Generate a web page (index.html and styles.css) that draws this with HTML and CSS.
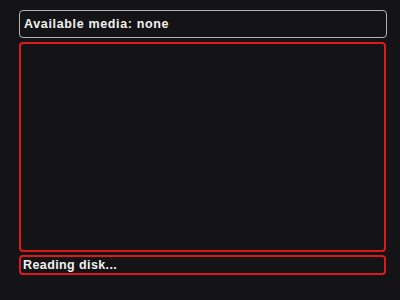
FILE: index.html
```html
<!DOCTYPE html>
<html>
<head>
<meta charset="utf-8">
<link rel="stylesheet" href="styles.css">
</head>
<body>
<div class="screen">
  <div class="box header"><span class="label">Available media: none</span></div>
  <div class="box list"></div>
  <div class="box status"><span class="label">Reading disk...</span></div>
</div>
</body>
</html>
```
FILE: styles.css
```css
html, body {
  margin: 0;
  padding: 0;
  background: #141316;
}
.screen {
  width: 400px;
  height: 300px;
  box-sizing: border-box;
  padding: 10px 14px 25px 19px;
  display: flex;
  flex-direction: column;
  gap: 3px;
  font-family: "Liberation Sans", Arial, sans-serif;
}
.box {
  box-sizing: border-box;
  border-radius: 4px;
  background: #141316;
}
.header {
  height: 28px;
  border: 1.5px solid #b4b4b4;
  display: flex;
  align-items: center;
  padding-left: 4px;
  margin-bottom: 1px;
  margin-right: -1px;
}
.list {
  flex: 1;
  border: 2px solid #dc1a1a;
}
.status {
  height: 20px;
  border: 2px solid #dc1a1a;
  display: flex;
  align-items: center;
  padding-left: 2px;
}
.label {
  color: #f2f2f2;
  font-weight: bold;
  font-size: 12.5px;
  letter-spacing: 0.65px;
  white-space: nowrap;
}
.status .label {
  letter-spacing: 0.4px;
}
```
